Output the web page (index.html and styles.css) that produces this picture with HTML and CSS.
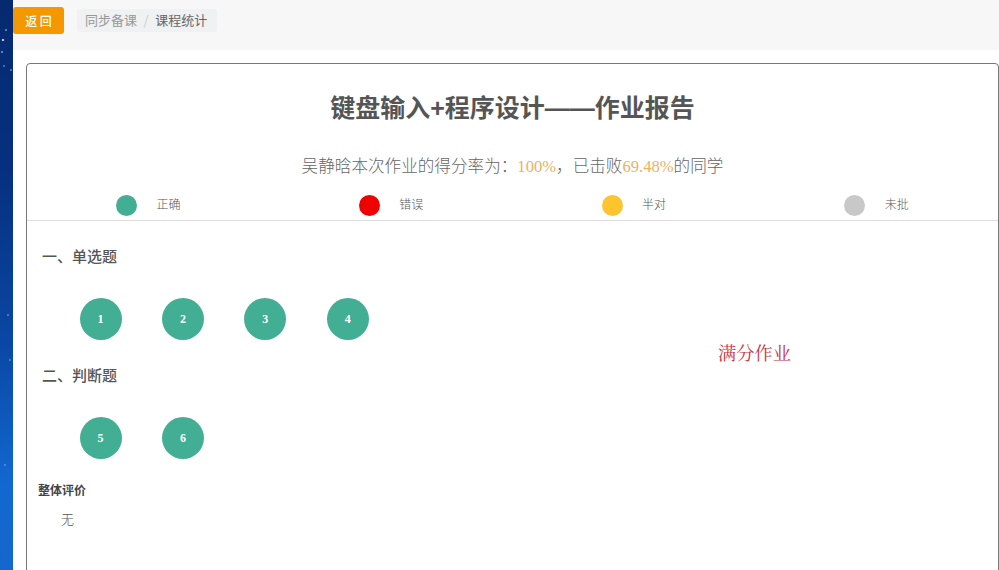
FILE: index.html
```html
<!DOCTYPE html>
<html lang="zh-CN">
<head>
<meta charset="utf-8">
<title>作业报告</title>
<link rel="stylesheet" href="styles.css">
</head>
<body>
<div class="page">
  <aside class="strip"></aside>
  <main class="main">
    <header class="topbar">
      <button class="back">返 回</button>
      <nav class="crumbs"><span class="crumb-link">同步备课</span><span class="crumb-sep">/</span><span class="crumb-current">课程统计</span></nav>
    </header>
    <section class="card">
      <h1 class="title">键盘输入+程序设计——作业报告</h1>
      <p class="score">吴静晗本次作业的得分率为：<span class="hl">100%</span>，已击败<span class="hl">69.48%</span>的同学</p>
      <div class="legend">
        <div class="legend-item"><span class="dot green"></span><span>正确</span></div>
        <div class="legend-item"><span class="dot red"></span><span>错误</span></div>
        <div class="legend-item"><span class="dot yellow"></span><span>半对</span></div>
        <div class="legend-item"><span class="dot gray"></span><span>未批</span></div>
      </div>
      <div class="body">
        <div class="questions">
          <h2 class="q-head">一、单选题</h2>
          <div class="q-row">
            <span class="q">1</span><span class="q">2</span><span class="q">3</span><span class="q">4</span>
          </div>
          <h2 class="q-head">二、判断题</h2>
          <div class="q-row">
            <span class="q">5</span><span class="q">6</span>
          </div>
          <h3 class="eval-head">整体评价</h3>
          <p class="eval-text">无</p>
        </div>
        <div class="full-mark">满分作业</div>
      </div>
    </section>
  </main>
</div>
</body>
</html>
```
FILE: styles.css
```css
* { box-sizing: border-box; }
html, body { margin: 0; padding: 0; height: 100%; overflow: hidden; }
body { font-family: "Noto Sans CJK SC", "Liberation Sans", sans-serif; color: #555; background: #fff; }
.page { display: flex; height: 570px; }
.strip {
  width: 13px; flex: none;
  background-color: #0b3f9a;
  background-image:
    radial-gradient(circle at 3px 40px, rgba(210,230,255,.85) 0 1px, transparent 1.6px),
    radial-gradient(circle at 6px 30px, rgba(190,220,255,.45) 0 .7px, transparent 1.2px),
    radial-gradient(circle at 2px 52px, rgba(190,220,255,.5) 0 .7px, transparent 1.2px),
    radial-gradient(circle at 11px 70px, rgba(190,220,255,.4) 0 .7px, transparent 1.2px),
    radial-gradient(circle at 4px 66px, rgba(190,220,255,.35) 0 .7px, transparent 1.2px),
    radial-gradient(circle at 8px 315px, rgba(190,220,255,.35) 0 .8px, transparent 1.3px),
    radial-gradient(circle at 10px 360px, rgba(190,220,255,.3) 0 .8px, transparent 1.3px),
    radial-gradient(circle at 5px 465px, rgba(190,220,255,.3) 0 .8px, transparent 1.3px),
    linear-gradient(180deg, #062a70 0%, #06307f 30%, #0a47a4 60%, #1268d0 85%, #1467cc 100%);
}
.main { flex: 1; min-width: 0; }
.topbar { height: 50px; background: #f7f7f7; display: flex; align-items: flex-start; }
.back {
  width: 51px; height: 27px; margin-top: 7px; padding: 0;
  border: 0; border-radius: 3px;
  background: #f39800; color: #fff;
  font: 500 12px "Noto Sans CJK SC", sans-serif;
}
.crumbs {
  margin: 9px 0 0 13px; height: 23px; width: 140px; padding: 0 8px 2px;
  background: #f0f1f2; border-radius: 3px;
  display: flex; align-items: center;
  font-size: 13px; color: #999;
}
.crumb-sep { margin: 0 6.5px; color: #ccc; }
.crumb-current { color: #666; }
.card {
  margin: 13px 0 0 13px; width: 973px; height: 520px;
  border: 1px solid #777; border-radius: 4px; background: #fff;
}
.title {
  margin: 26px 0 0; text-align: center;
  font-size: 25px; line-height: 36px; font-weight: 700; color: #555;
  font-family: "Liberation Sans", "Noto Sans CJK SC", sans-serif;
}
.score {
  margin: 29px 0 0; text-align: center;
  font-size: 16.6px; line-height: 24px; font-weight: 300; color: #666;
  font-family: "Liberation Serif", "Noto Sans CJK SC", serif;
}
.hl { color: #eeb063; font-weight: 400; }
.legend { display: flex; height: 28px; margin-top: 14px; border-bottom: 1px solid #ddd; padding-top: 2px; }
.legend-item { width: 25%; padding-left: 89px; display: flex; align-items: flex-start; gap: 19.5px; font-size: 12px; font-weight: 300; line-height: 18px; color: #555; }
.dot { width: 21px; height: 21px; border-radius: 50%; flex: none; }
.green { background: #42ae94; }
.red { background: #f00000; }
.yellow { background: #fdc42d; }
.gray { background: #c8c8c8; }
.body { display: flex; }
.questions { width: 660px; flex: none; padding-left: 15px; }
.q-head { margin: 25px 0 0; font-size: 15px; line-height: 20px; font-weight: 500; color: #555; }
.q-row { display: flex; gap: 40.4px; padding-left: 37.5px; margin-top: 32px; }
.q-row + .q-head { margin-top: 25px; }
.q {
  width: 42px; height: 42px; border-radius: 50%;
  background: #42ae94; color: #fff;
  display: flex; align-items: center; justify-content: center;
  font: 700 12px "Liberation Serif", serif;
}
.eval-head { margin: 21.5px 0 0 -4px; font-size: 12px; line-height: 18px; font-weight: 700; color: #444; }
.eval-text { margin: 11.5px 0 0 19px; font-size: 13px; font-weight: 300; line-height: 18px; color: #555; }
.full-mark {
  margin: 119px 0 0 31px; font-size: 18.25px; line-height: 24px; color: #c9323c;
  font-family: "Noto Serif CJK SC", "Liberation Serif", "Noto Sans CJK SC", serif;
}
```
